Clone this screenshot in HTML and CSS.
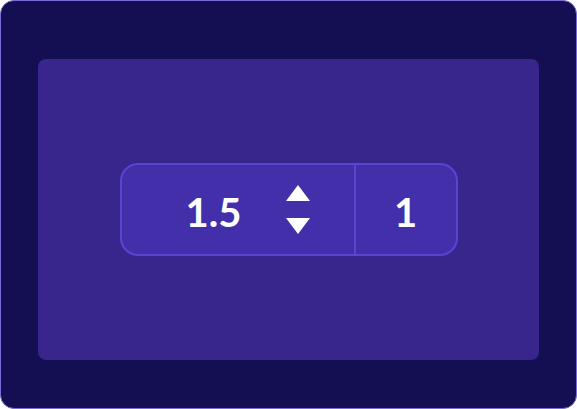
FILE: index.html
```html
<!DOCTYPE html>
<html>
<head>
<meta charset="utf-8">
<link rel="stylesheet" href="styles.css">
</head>
<body>
<div class="frame">
  <div class="panel">
    <div class="control">
      <div class="left">
        <span class="value">1.5</span>
        <div class="stepper">
          <svg width="26" height="18" viewBox="0 0 26 18"><polygon points="13,1 25,17 1,17" fill="#fff"/></svg>
          <svg width="26" height="18" viewBox="0 0 26 18"><polygon points="1,1 25,1 13,17" fill="#fff"/></svg>
        </div>
      </div>
      <div class="divider"></div>
      <div class="right"><span class="value">1</span></div>
    </div>
  </div>
</div>
</body>
</html>
```
FILE: styles.css
```css
html, body { margin: 0; padding: 0; background: #fff; }
.frame {
  width: 577px; height: 409px; box-sizing: border-box;
  background: #130f52; border: 1px solid #7b6ad8; border-radius: 14px;
  padding: 58px 37px 48px 37px;
}
.panel {
  width: 501px; height: 301px; background: #38268c; border-radius: 8px;
  display: flex; align-items: center; justify-content: center;
}
.control {
  width: 338px; height: 93px; box-sizing: border-box;
  background: #432fa9; border: 2px solid #5a45d2; border-radius: 18px;
  display: flex; align-items: stretch;
}
.left { width: 232px; display: flex; align-items: center; padding-left: 64px; box-sizing: border-box; }
.divider { width: 2px; background: #5a45d2; }
.right { flex: 1; display: flex; align-items: center; justify-content: center; }
.value { font-family: Lato, sans-serif; font-weight: 700; font-size: 40px; color: #fff; line-height: 1; padding-top: 4px; }
.stepper { display: flex; flex-direction: column; gap: 15px; margin-left: 44px; }
.stepper svg { display: block; }
```
